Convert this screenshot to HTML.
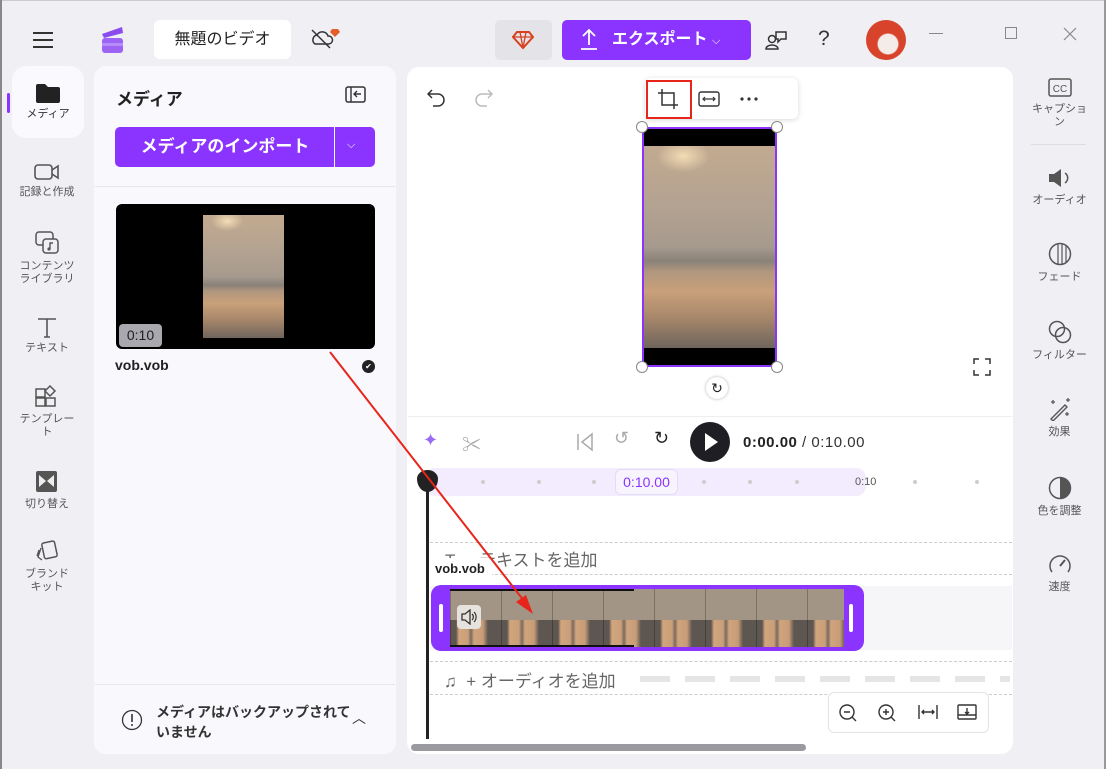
<!DOCTYPE html>
<html><head><meta charset="utf-8"><style>
*{box-sizing:border-box;margin:0;padding:0}
body{width:1106px;height:769px;overflow:hidden;background:#f0eff4;font-family:"Liberation Sans","Noto Sans CJK JP",sans-serif;color:#222;position:relative}
.a{position:absolute}
.nav{position:absolute;left:0;width:94px;text-align:center;font-size:11px;color:#555;line-height:13px}
.nav svg{display:block;margin:0 auto 4px}
.rs{position:absolute;left:1013px;width:93px;text-align:center;font-size:11px;color:#555;line-height:13px}
.rs svg{display:block;margin:0 auto 5px}
.sea{background:radial-gradient(ellipse 20% 8% at 30% 5%,#f3dcb5,transparent),linear-gradient(180deg,#c2aa90 0%,#b3a291 30%,#a69a8e 50%,#8a8178 57%,#b0967e 62%,#c9a07a 72%,#a7876a 85%,#6f655c 100%)}
</style></head><body>
<div class="a" style="left:0;top:0;width:1106px;height:1px;background:#ccc"></div>
<div class="a" style="left:0;top:0;width:2px;height:769px;background:#888"></div>
<div class="a" style="left:1104px;top:0;width:2px;height:769px;background:#999"></div>
<!-- top bar -->
<svg class="a" style="left:32px;top:31px" width="22" height="18"><path d="M1 2h20M1 9h20M1 16h20" stroke="#333" stroke-width="2"/></svg>
<svg class="a" style="left:98px;top:24px" width="30" height="32"><path d="M4 10 L24 3 L25 9 L6 14Z" fill="#8a4cf0"/><rect x="4" y="14" width="21" height="15" rx="3" fill="#9c63f5"/><rect x="4" y="19" width="21" height="3" fill="#b58cf8"/></svg>
<div class="a" style="left:154px;top:20px;width:137px;height:39px;background:#fff;border-radius:6px;font-size:16px;line-height:39px;text-align:center">無題のビデオ</div>
<svg class="a" style="left:310px;top:27px" width="30" height="24"><path d="M5 17a5 5 0 0 1 2-9 6 6 0 0 1 11 1 4 4 0 0 1 1 8z" fill="none" stroke="#333" stroke-width="1.5"/><path d="M2 3l18 18" stroke="#333" stroke-width="1.5"/><path d="M22 2h6l2 3-5 5-5-5z" fill="#e25d2a"/></svg>
<div class="a" style="left:495px;top:20px;width:57px;height:40px;background:#e4e3e8;border-radius:5px"></div>
<svg class="a" style="left:512px;top:30px" width="22" height="20"><path d="M5 2h12l4 5-10 11L1 7z" fill="none" stroke="#d8411e" stroke-width="2"/><path d="M1 7h20M8 2l3 16M14 2l-3 16" stroke="#d8411e" stroke-width="1.3"/></svg>
<div class="a" style="left:562px;top:20px;width:189px;height:40px;background:#8b34ff;border-radius:5px;color:#fff;font-weight:bold;font-size:16px;line-height:40px;padding-left:50px">エクスポート <span style="font-weight:normal;font-size:11px">⌵</span></div>
<svg class="a" style="left:580px;top:28px" width="18" height="24"><path d="M9 17V2M3 8l6-6 6 6M1 21h16" stroke="#fff" stroke-width="1.8" fill="none"/></svg>
<svg class="a" style="left:764px;top:29px" width="24" height="22"><circle cx="8" cy="10" r="3.5" fill="none" stroke="#333" stroke-width="1.5"/><path d="M2 20a6 4 0 0 1 12 0z" fill="none" stroke="#333" stroke-width="1.5"/><path d="M12 3h10v7h-5l-3 3v-3h-2z" fill="none" stroke="#333" stroke-width="1.5"/></svg>
<div class="a" style="left:818px;top:27px;font-size:21px;color:#333">?</div>
<div class="a" style="left:866px;top:20px;width:40px;height:40px;border-radius:50%;background:radial-gradient(circle at 55% 60%,#f3ece8 30%,#d8432c 34%)"></div>
<div class="a" style="left:929px;top:33px;width:14px;height:1px;background:#888"></div>
<div class="a" style="left:1005px;top:27px;width:12px;height:12px;border:1px solid #888"></div>
<svg class="a" style="left:1063px;top:27px" width="14" height="14"><path d="M1 1l12 12M13 1L1 13" stroke="#888" stroke-width="1.2"/></svg>
<!-- left nav -->
<div class="a" style="left:12px;top:66px;width:72px;height:72px;background:#fafafe;border-radius:14px"></div>
<div class="a" style="left:7px;top:93px;width:3px;height:20px;background:#8b34ff;border-radius:2px"></div>
<div class="nav" style="top:82px;left:11px;width:74px;color:#333"><svg width="26" height="22"><path d="M1 4a2 2 0 0 1 2-2h7l3 3h10a2 2 0 0 1 2 2v12a2 2 0 0 1-2 2H3a2 2 0 0 1-2-2z" fill="#222"/></svg>メディア</div>
<div class="nav" style="top:162px"><svg width="26" height="20"><rect x="1" y="3" width="17" height="14" rx="3" fill="none" stroke="#555" stroke-width="1.6"/><path d="M18 8l6-4v12l-6-4" fill="none" stroke="#555" stroke-width="1.6"/></svg>記録と作成</div>
<div class="nav" style="top:228px"><svg width="26" height="28"><rect x="2" y="4" width="17" height="13" rx="3" fill="none" stroke="#555" stroke-width="1.5"/><rect x="9" y="11" width="15" height="14" rx="3" fill="#f0eff4" stroke="#555" stroke-width="1.5"/><path d="M16 21v-6h3" stroke="#555" stroke-width="1.4" fill="none"/><circle cx="15" cy="21" r="1.6" fill="#555"/></svg>コンテンツ<br>ライブラリ</div>
<div class="nav" style="top:316px"><svg width="22" height="22"><path d="M2 3h18M11 3v18M8 21h6" stroke="#555" stroke-width="1.6" fill="none"/></svg>テキスト</div>
<div class="nav" style="top:385px"><svg width="26" height="24"><rect x="2" y="4" width="9" height="8" fill="none" stroke="#555" stroke-width="1.5"/><rect x="2" y="13" width="9" height="8" fill="none" stroke="#555" stroke-width="1.5"/><rect x="12" y="13" width="9" height="8" fill="none" stroke="#555" stroke-width="1.5"/><path d="M16 1l5 5-5 5-5-5z" fill="none" stroke="#555" stroke-width="1.5"/></svg>テンプレー<br>ト</div>
<div class="nav" style="top:470px"><svg width="24" height="24"><rect x="1" y="1" width="21" height="21" rx="2" fill="#555"/><path d="M4 5l7 6-7 6zM19 5l-7 6 7 6z" fill="#eee"/></svg>切り替え</div>
<div class="nav" style="top:540px"><svg width="24" height="24"><rect x="8" y="2" width="13" height="16" rx="2" transform="rotate(-12 14 10)" fill="none" stroke="#555" stroke-width="1.5"/><path d="M6 8l-3 9 4 3M4 10l-2 6" stroke="#555" stroke-width="1.3" fill="none"/></svg>ブランド<br>キット</div>
<!-- media panel -->
<div class="a" style="left:94px;top:66px;width:302px;height:688px;background:#f9f9fd;border-radius:12px"></div>
<div class="a" style="left:116px;top:85px;font-size:17px;font-weight:bold">メディア</div>
<svg class="a" style="left:345px;top:86px" width="22" height="18"><rect x="1" y="1" width="19" height="15" rx="2" fill="none" stroke="#333" stroke-width="1.5"/><path d="M6 1v15M16 8h-7M12 5l-3 3 3 3" stroke="#333" stroke-width="1.4" fill="none"/></svg>
<div class="a" style="left:115px;top:127px;width:260px;height:40px;background:#8b34ff;border-radius:5px"></div>
<div class="a" style="left:115px;top:127px;width:220px;height:40px;color:#fff;font-weight:bold;font-size:17px;line-height:40px;text-align:center">メディアのインポート</div>
<div class="a" style="left:334px;top:127px;width:1px;height:40px;background:#fff"></div>
<div class="a" style="left:347px;top:139px;color:#fff;font-size:11px">⌵</div>
<div class="a" style="left:95px;top:186px;width:300px;height:1px;background:#e6e5ec"></div>
<div class="a" style="left:116px;top:204px;width:259px;height:145px;background:#000;border-radius:6px"></div>
<div class="a sea" style="left:203px;top:215px;width:81px;height:123px"></div>
<div class="a" style="left:119px;top:324px;width:43px;height:23px;background:#a8a8ae;border-radius:4px;font-size:14px;line-height:23px;text-align:center;color:#222">0:10</div>
<div class="a" style="left:115px;top:357px;font-size:14px;font-weight:bold;color:#222">vob.vob</div>
<div class="a" style="left:362px;top:360px;width:13px;height:13px;border-radius:50%;background:#222;color:#fff;font-size:8px;line-height:13px;text-align:center">✔</div>
<div class="a" style="left:95px;top:684px;width:300px;height:1px;background:#e6e5ec"></div>
<svg class="a" style="left:121px;top:709px" width="22" height="22"><circle cx="11" cy="11" r="9.5" fill="none" stroke="#333" stroke-width="1.3"/><path d="M11 5v8" stroke="#333" stroke-width="1.6"/><circle cx="11" cy="16" r="1" fill="#333"/></svg>
<div class="a" style="left:156px;top:702px;font-size:14px;font-weight:bold;color:#333;line-height:20px">メディアはバックアップされて<br>いません</div>
<div class="a" style="left:352px;top:708px;font-size:14px;color:#333">︿</div>
<!-- editor -->
<div class="a" style="left:407px;top:67px;width:606px;height:687px;background:#fff;border-radius:12px"></div>
<svg class="a" style="left:427px;top:87px" width="20" height="20"><path d="M5 3L1 7l4 4M1 7h10a6 6 0 0 1 0 12H6" stroke="#333" stroke-width="1.5" fill="none"/></svg>
<svg class="a" style="left:473px;top:87px" width="20" height="20"><path d="M15 3l4 4-4 4M19 7H9a6 6 0 0 0 0 12h5" stroke="#bbb" stroke-width="1.5" fill="none"/></svg>
<div class="a" style="left:645px;top:78px;width:153px;height:41px;background:#fff;border-radius:6px;box-shadow:0 1px 6px rgba(0,0,0,.15)"></div>
<div class="a" style="left:646px;top:80px;width:46px;height:39px;border:2px solid #e8251a"></div>
<svg class="a" style="left:657px;top:88px" width="24" height="24"><path d="M5 1v16h16M1 5h16v16" stroke="#333" stroke-width="1.5" fill="none"/></svg>
<svg class="a" style="left:698px;top:91px" width="24" height="16"><rect x="1" y="1" width="20" height="14" rx="2" fill="none" stroke="#333" stroke-width="1.4"/><path d="M5 8h12M7 6l-2 2 2 2M15 6l2 2-2 2" stroke="#333" stroke-width="1.2" fill="none"/></svg>
<svg class="a" style="left:740px;top:97px" width="20" height="4"><circle cx="2" cy="2" r="1.6" fill="#333"/><circle cx="9" cy="2" r="1.6" fill="#333"/><circle cx="16" cy="2" r="1.6" fill="#333"/></svg>
<div class="a" style="left:642px;top:127px;width:135px;height:240px;background:#000;border:2px solid #8b34ff"></div>
<div class="a sea" style="left:644px;top:146px;width:131px;height:202px"></div>
<div class="a" style="left:636px;top:121px;width:12px;height:12px;border-radius:50%;background:#fff;border:1px solid #888"></div>
<div class="a" style="left:771px;top:121px;width:12px;height:12px;border-radius:50%;background:#fff;border:1px solid #888"></div>
<div class="a" style="left:636px;top:361px;width:12px;height:12px;border-radius:50%;background:#fff;border:1px solid #888"></div>
<div class="a" style="left:771px;top:361px;width:12px;height:12px;border-radius:50%;background:#fff;border:1px solid #888"></div>
<div class="a" style="left:706px;top:377px;width:22px;height:22px;border-radius:50%;background:#fff;box-shadow:0 0 3px rgba(0,0,0,.3);font-size:14px;line-height:22px;text-align:center">↻</div>
<svg class="a" style="left:973px;top:358px" width="18" height="18"><path d="M1 6V1h5M12 1h5v5M17 12v5h-5M6 17H1v-5" stroke="#333" stroke-width="1.5" fill="none"/></svg>
<div class="a" style="left:408px;top:416px;width:604px;height:1px;background:#eee"></div>
<!-- transport -->
<div class="a" style="left:423px;top:430px;color:#9b6af5;font-size:18px">✦</div>
<div class="a" style="left:462px;top:430px;color:#aaa;font-size:19px">✂</div>
<svg class="a" style="left:576px;top:432px" width="18" height="20"><path d="M2 2v16M16 2L6 10l10 8z" stroke="#aaa" stroke-width="1.5" fill="none"/></svg>
<div class="a" style="left:614px;top:428px;color:#aaa;font-size:18px">↺</div>
<div class="a" style="left:654px;top:428px;color:#222;font-size:18px">↻</div>
<div class="a" style="left:690px;top:422px;width:40px;height:40px;border-radius:50%;background:#1e1e24"></div>
<svg class="a" style="left:703px;top:432px" width="16" height="20"><path d="M2 1l13 9-13 9z" fill="#fff"/></svg>
<div class="a" style="left:743px;top:434px;font-size:15px;font-weight:bold;letter-spacing:.5px;color:#222">0:00.00 <span style="font-weight:normal;color:#333">/ 0:10.00</span></div>
<!-- ruler -->
<div class="a" style="left:425px;top:468px;width:441px;height:28px;background:#f2ecfe;border-radius:10px"></div>
<div class="a" style="left:615px;top:469px;width:63px;height:26px;background:#f7f4fd;border:1px solid #e4dcf5;border-radius:6px;color:#8b34ff;font-size:14px;line-height:24px;text-align:center">0:10.00</div>
<div class="a" style="left:855px;top:476px;font-size:11px;color:#555">0:10</div>
<div class="a" style="left:481px;top:480px;width:4px;height:4px;background:#ccc;border-radius:50%;box-shadow:56px 0 #ccc,111px 0 #ccc,221px 0 #ccc,267px 0 #ccc,314px 0 #ccc,432px 0 #ccc,494px 0 #ccc"></div>
<div class="a" style="left:426px;top:480px;width:3px;height:259px;background:#222"></div>
<div class="a" style="left:417px;top:470px;width:21px;height:22px;background:#222;border-radius:50% 50% 50% 50%/40% 40% 60% 60%"></div>
<!-- tracks -->
<div class="a" style="left:430px;top:542px;width:582px;height:1px;border-top:1px dashed #ccc"></div>
<div class="a" style="left:430px;top:574px;width:582px;height:1px;border-top:1px dashed #ccc"></div>
<div class="a" style="left:445px;top:546px;font-size:17px;color:#666">T&nbsp;&nbsp;&nbsp;&nbsp;&nbsp;テキストを追加</div>
<div class="a" style="left:430px;top:558px;width:62px;height:22px;background:#fff;border-radius:4px;font-size:13px;font-weight:bold;line-height:22px;padding-left:5px">vob.vob</div>
<div class="a" style="left:430px;top:586px;width:582px;height:64px;background:#f6f6f8"></div>
<div class="a" style="left:431px;top:585px;width:433px;height:66px;background:#8b34ff;border-radius:10px"></div>
<div class="a" style="left:450px;top:589px;width:394px;height:58px;background:#a39585"></div>
<div class="a" style="left:450px;top:620px;width:394px;height:27px;background:repeating-linear-gradient(90deg,#5e5650 0,#5e5650 6px,#d2a57c 9px,#c99f7a 18px,#7a6a5e 21px,#d0a47c 24px,#c79c78 33px,#5e5650 38px,#5e5650 51px)"></div>
<div class="a" style="left:450px;top:589px;width:394px;height:58px;background:repeating-linear-gradient(90deg,rgba(0,0,0,.25) 0,rgba(0,0,0,.25) 1px,transparent 1px,transparent 51px)"></div>
<div class="a" style="left:450px;top:589px;width:184px;height:2px;background:#111"></div>
<div class="a" style="left:450px;top:645px;width:184px;height:2px;background:#111"></div>
<div class="a" style="left:439px;top:604px;width:4px;height:28px;background:#fff;border-radius:2px"></div>
<div class="a" style="left:849px;top:604px;width:4px;height:28px;background:#fff;border-radius:2px"></div>
<div class="a" style="left:457px;top:605px;width:24px;height:24px;background:#e6e2de;border-radius:4px"></div>
<svg class="a" style="left:460px;top:609px" width="18" height="16"><path d="M2 5h3l5-4v14l-5-4H2z" fill="none" stroke="#333" stroke-width="1.3"/><path d="M12 5a4 4 0 0 1 0 6M14 3a7 7 0 0 1 0 10" stroke="#333" stroke-width="1.2" fill="none"/></svg>
<div class="a" style="left:430px;top:661px;width:582px;height:1px;border-top:1px dashed #ccc"></div>
<div class="a" style="left:430px;top:694px;width:582px;height:1px;border-top:1px dashed #ccc"></div>
<div class="a" style="left:444px;top:667px;font-size:17px;color:#666">♫&nbsp;&nbsp;+ オーディオを追加</div>
<div class="a" style="left:640px;top:676px;width:370px;height:6px;background:repeating-linear-gradient(90deg,#e5e5e5 0,#e5e5e5 30px,transparent 30px,transparent 45px)"></div>
<div class="a" style="left:828px;top:692px;width:161px;height:41px;background:#fff;border:1px solid #e2e2e8;border-radius:6px"></div>
<svg class="a" style="left:838px;top:703px" width="140" height="20"><g stroke="#333" stroke-width="1.4" fill="none"><circle cx="9" cy="9" r="7"/><path d="M14 14l4 4M6 9h6"/><circle cx="48" cy="9" r="7"/><path d="M53 14l4 4M45 9h6M48 6v6"/><path d="M81 2v14M99 2v14M84 9h12M86 7l-2 2 2 2M94 7l2 2-2 2"/><rect x="120" y="2" width="18" height="14" rx="1"/><path d="M120 12h18M129 5v6M127 9l2 2 2-2"/></g></svg>
<div class="a" style="left:411px;top:744px;width:395px;height:7px;background:#9a9aa0;border-radius:4px"></div>
<!-- red arrow -->
<svg class="a" style="left:0;top:0" width="1106" height="769"><path d="M330 352L528 606" stroke="#e8251a" stroke-width="2"/><path d="M533 614L516 602L526 595z" fill="#e8251a"/></svg>
<!-- right sidebar -->
<div class="rs" style="top:78px"><svg width="24" height="20"><rect x="1" y="1" width="22" height="17" rx="2" fill="none" stroke="#555" stroke-width="1.5"/><text x="12" y="14" font-size="10" text-anchor="middle" fill="#555" font-family="Liberation Sans">CC</text></svg>キャプショ<br>ン</div>
<div class="a" style="left:1031px;top:144px;width:55px;height:1px;background:#ddd"></div>
<div class="rs" style="top:167px"><svg width="26" height="22"><path d="M2 7h5l7-5v18l-7-5H2z" fill="#555"/><path d="M18 6a6 6 0 0 1 0 10" stroke="#555" stroke-width="1.5" fill="none"/></svg>オーディオ</div>
<div class="rs" style="top:242px"><svg width="26" height="24"><circle cx="13" cy="12" r="10.5" fill="none" stroke="#555" stroke-width="1.5"/><path d="M11 2v20M15 2v20M19 4v16" stroke="#555" stroke-width="1.2"/></svg>フェード</div>
<div class="rs" style="top:320px"><svg width="26" height="24"><circle cx="10" cy="9" r="7.5" fill="none" stroke="#555" stroke-width="1.5"/><circle cx="16" cy="15" r="7.5" fill="none" stroke="#555" stroke-width="1.5"/></svg>フィルター</div>
<div class="rs" style="top:397px"><svg width="26" height="24"><path d="M4 22L18 8l2 2L6 24z" fill="none" stroke="#555" stroke-width="1.4"/><path d="M6 3v4M4 5h4M21 1v4M19 3h4M20 15v4M18 17h4" stroke="#555" stroke-width="1.2"/></svg>効果</div>
<div class="rs" style="top:476px"><svg width="26" height="24"><circle cx="13" cy="12" r="10.5" fill="none" stroke="#555" stroke-width="1.5"/><path d="M13 1.5a10.5 10.5 0 0 1 0 21z" fill="#555"/></svg>色を調整</div>
<div class="rs" style="top:552px"><svg width="26" height="24"><path d="M5 20a10 10 0 1 1 16 0" fill="none" stroke="#555" stroke-width="1.5"/><path d="M13 14l5-6" stroke="#555" stroke-width="2"/></svg>速度</div>
</body></html>
